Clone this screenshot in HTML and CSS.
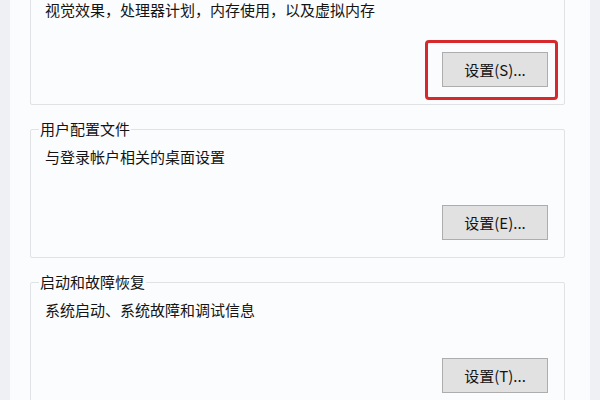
FILE: index.html
```html
<!DOCTYPE html>
<html lang="zh-CN">
<head>
<meta charset="utf-8">
<title>系统属性 - 高级</title>
<link rel="stylesheet" href="styles.css">
</head>
<body>
<div class="panel">
  <div class="groups">
    <fieldset class="group group--first">
      <legend class="group-title">性能</legend>
      <p class="desc">视觉效果，处理器计划，内存使用，以及虚拟内存</p>
      <div class="btn-row">
        <span class="highlight"><button class="btn">设置(S)...</button></span>
      </div>
    </fieldset>
    <fieldset class="group">
      <legend class="group-title">用户配置文件</legend>
      <p class="desc">与登录帐户相关的桌面设置</p>
      <div class="btn-row">
        <button class="btn">设置(E)...</button>
      </div>
    </fieldset>
    <fieldset class="group">
      <legend class="group-title">启动和故障恢复</legend>
      <p class="desc">系统启动、系统故障和调试信息</p>
      <div class="btn-row">
        <button class="btn">设置(T)...</button>
      </div>
    </fieldset>
  </div>
</div>
</body>
</html>
```

FILE: styles.css
```css
html, body {
  margin: 0;
  padding: 0;
  height: 100%;
  overflow: hidden;
}

body {
  background: #eef0f3;
  font-family: "Noto Sans CJK SC", "Noto Sans", sans-serif;
  font-size: 15px;
  color: #141414;
}

.panel {
  margin: 0 10px;
  height: 400px;
  background: #fbfcfd;
  padding: 0 25px 0 20px;
  box-sizing: border-box;
  overflow: hidden;
}

.groups {
  margin-top: -34px;
  display: flex;
  flex-direction: column;
  gap: 14px;
}

.group {
  margin: 0;
  border: 1px solid #e0e2e5;
  border-radius: 2px;
  padding: 8px 16px 17px 8px;
  min-width: 0;
}

.group-title {
  padding: 0 1px;
  line-height: 20px;
  font-size: 15px;
  color: #141414;
}

.desc {
  margin: 0;
  padding-left: 6px;
  line-height: 20px;
  white-space: nowrap;
}

.btn-row {
  margin-top: 38px;
  display: flex;
  justify-content: flex-end;
}

.group--first .desc {
  padding-top: 6px;
}

.group--first .btn-row {
  margin-top: 32px;
}

.highlight {
  position: relative;
  display: inline-flex;
}

.highlight::before {
  content: "";
  position: absolute;
  left: -17px;
  right: -10px;
  top: -12px;
  bottom: -13px;
  border: 3px solid #d7282c;
  border-radius: 4px;
}

.btn {
  width: 106px;
  height: 35px;
  margin: 0;
  padding: 0;
  background: #e1e1e1;
  border: 1px solid #adadad;
  border-radius: 0;
  font-family: "Noto Sans CJK SC", "Noto Sans", sans-serif;
  font-size: 15px;
  color: #141414;
  line-height: 33px;
}
```
